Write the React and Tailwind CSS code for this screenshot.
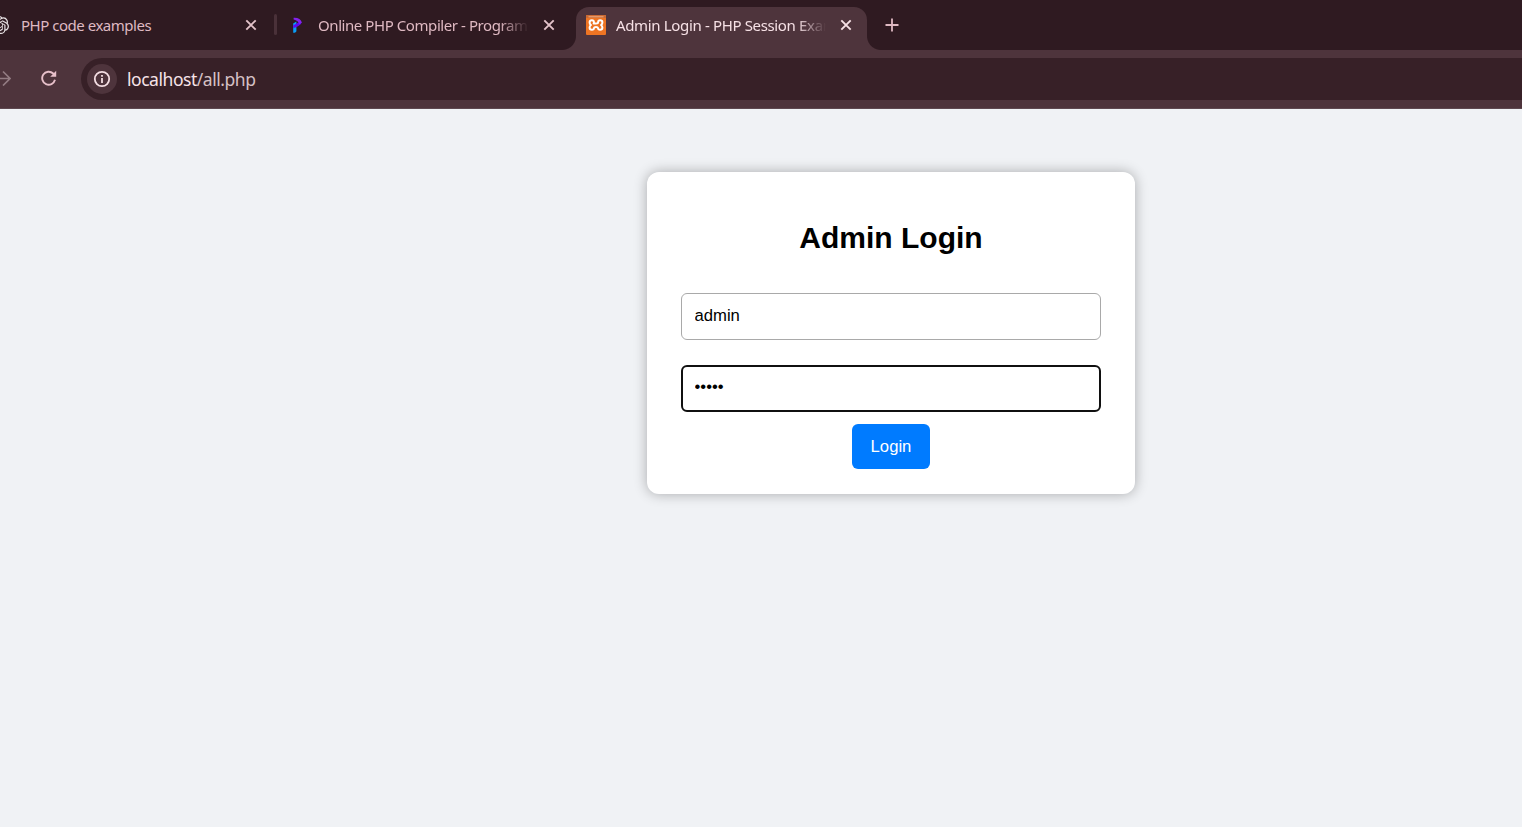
import { SiOpenai } from "react-icons/si";

function Close({ className = "" }) {
  return (
    <svg viewBox="0 0 12 12" className={`h-3 w-3 shrink-0 ${className}`} fill="none" stroke="currentColor" strokeWidth="1.9">
      <path d="M1.3 1.3 10.7 10.7M10.7 1.3 1.3 10.7" />
    </svg>
  );
}

function ProgramizIcon() {
  return (
    <svg viewBox="0 0 20 20" className="h-5 w-5 shrink-0">
      <path d="M4.2 8.4 7.4 6.6v9.4q0 1.8-3.2 1.8z" fill="#0a9cf5" />
      <path d="M4.2 10.6 9.6 7.2 12.8 7.4Q10.4 11.8 4.2 13z" fill="#5a0aee" />
      <path d="M4.6 2.8Q11.4 2.4 12.9 7.6L10.4 9.3Q9.4 5.4 4.6 4.4z" fill="#8322ee" />
    </svg>
  );
}

function XamppIcon() {
  return (
    <svg viewBox="0 0 20 20" className="h-5 w-5 shrink-0">
      <rect width="20" height="20" rx="1" fill="#ed7423" />
      <path d="M0 1Q0 0 1 0H19Q20 0 20 1V3H0z" fill="#c96a35" />
      <path d="M2.5 1.8H17.5" stroke="#efad80" strokeWidth="1" />
      <path
        d="M7.9 8.1V7.2Q7.9 5.3 5.9 5.3Q3.6 5.3 3.6 7.5Q3.6 9.2 5 10Q3.6 10.8 3.6 12.6Q3.6 14.8 5.9 14.8Q7.9 14.8 8 13Q8.2 11.9 10 11.9Q11.8 11.9 12 13Q12.1 14.8 14.1 14.8Q16.4 14.8 16.4 12.6Q16.4 10.8 15 10Q16.4 9.2 16.4 7.5Q16.4 5.3 14.1 5.3Q12.1 5.3 12.1 7.2Q12.1 8.4 10 8.4H7.6"
        fill="none"
        stroke="#fff"
        strokeWidth="2"
        strokeLinejoin="round"
        strokeLinecap="round"
      />
    </svg>
  );
}

function TabStrip() {
  return (
    <header className="flex h-[50px] bg-[#2f1a21] text-[15px] leading-[20px] text-[#dfb9c2]">
      <div className="flex w-[274px] shrink-0 items-center">
        <SiOpenai className="-ml-[9px] h-[18px] w-[18px] shrink-0 text-[#e8e2e4]" />
        <span className="ml-[12px] w-[224px] overflow-hidden whitespace-nowrap tracking-[-0.48px]">PHP code examples</span>
        <Close className="text-[#e4c3ca]" />
      </div>
      <div className="mt-[14px] h-[21px] w-[3px] shrink-0 rounded-full bg-[#4a3139]" />
      <div className="flex w-[285px] shrink-0 items-center">
        <span className="ml-[12px]"><ProgramizIcon /></span>
        <span className="ml-[9px] mr-[14px] w-[211px] overflow-hidden whitespace-nowrap tracking-[-0.43px] [mask-image:linear-gradient(to_right,black_181px,transparent_211px)]">
          Online PHP Compiler - Programiz
        </span>
        <Close className="text-[#e4c3ca]" />
      </div>
      <div className="h-[14px] w-[14px] shrink-0 self-end bg-[radial-gradient(circle_at_0_0,transparent_13.5px,#4e343c_14.5px)]" />
      <div className="mt-[7px] flex w-[291px] shrink-0 items-center rounded-t-[13px] bg-[#4e343c] pb-[7px] text-[#f6e0e5]">
        <span className="ml-[10px]"><XamppIcon /></span>
        <span className="ml-[10px] mr-[14px] w-[210px] overflow-hidden whitespace-nowrap tracking-[-0.35px] [mask-image:linear-gradient(to_right,black_180px,transparent_210px)]">
          Admin Login - PHP Session Example
        </span>
        <Close />
      </div>
      <div className="h-[14px] w-[14px] shrink-0 self-end bg-[radial-gradient(circle_at_100%_0,transparent_13.5px,#4e343c_14.5px)]" />
      <svg viewBox="0 0 14 14" className="ml-1 mt-[18px] h-[14px] w-[14px] shrink-0" fill="none" stroke="currentColor" strokeWidth="1.8">
        <path d="M7 .5V13.5M.5 7H13.5" />
      </svg>
    </header>
  );
}

function Toolbar() {
  return (
    <nav className="flex h-[59px] border-b border-[#5e4850] bg-[#4e343c] pt-2">
      <svg viewBox="0 0 14 16" className="-ml-[3px] mt-[12px] h-4 w-[14px] shrink-0" fill="none" stroke="#927b82" strokeWidth="1.7">
        <path d="M0 8.5H13M6 1.5 13 8.5 6 15.5" />
      </svg>
      <svg viewBox="0 0 16 16" className="ml-[30px] mt-[12px] h-4 w-4 shrink-0" fill="none" stroke="#e7c0ca" strokeWidth="1.9">
        <path d="M14 9.8A6.5 6.5 0 1 1 12.2 3.5L14 5.4" />
        <path d="M15.2 .8V6.8H9.2L12 4z" fill="#e7c0ca" stroke="none" />
      </svg>
      <div className="ml-[24px] flex h-[42px] flex-1 items-center rounded-l-full bg-[#372027] pl-[6px]">
        <div className="flex h-[30px] w-[30px] items-center justify-center rounded-full bg-[#4e343c]">
          <svg viewBox="0 0 18 18" className="h-[18px] w-[18px]" fill="none" stroke="#f3dde2" strokeWidth="1.8">
            <circle cx="9" cy="9" r="7.2" />
            <path d="M9 8V13M9 5V6.7" />
          </svg>
        </div>
        <span className="ml-[10px] whitespace-nowrap text-[17.5px] leading-[24px] tracking-[-0.46px] text-[#f6e3e8]">
          localhost<span className="text-[#d5c0c5]">/all.php</span>
        </span>
      </div>
    </nav>
  );
}

export default function App() {
  return (
    <div className="flex h-screen w-full flex-col overflow-hidden bg-[#f0f2f5] font-['Noto_Sans',sans-serif]">
      <TabStrip />
      <Toolbar />
      <main className="flex flex-1 items-start pl-[647px] pt-[63px] font-['Liberation_Sans',sans-serif] text-black">
        <form className="flex h-[322px] w-[488px] flex-col items-center rounded-[12px] bg-white px-[34px] shadow-[0_0_12.5px_rgba(0,0,0,0.3)]">
          <h2 className="mt-[48px] text-[30px] leading-[36px] font-bold">Admin Login</h2>
          <input
            type="text"
            defaultValue="admin"
            className="mt-[37px] h-[47px] w-full rounded-[6px] border border-[#a9a9a9] px-[12.5px] pb-[2px] text-[16.67px] outline-none"
          />
          <input
            type="password"
            defaultValue="admin"
            className="mt-[25px] h-[47px] w-full rounded-[6px] border-2 border-[#101010] px-[11.5px] pb-[3px] text-[16.67px] outline-none"
          />
          <button type="button" className="mt-[12px] h-[45px] w-[78px] rounded-[6px] bg-[#007bff] text-[16.67px] text-white">
            Login
          </button>
        </form>
      </main>
    </div>
  );
}
